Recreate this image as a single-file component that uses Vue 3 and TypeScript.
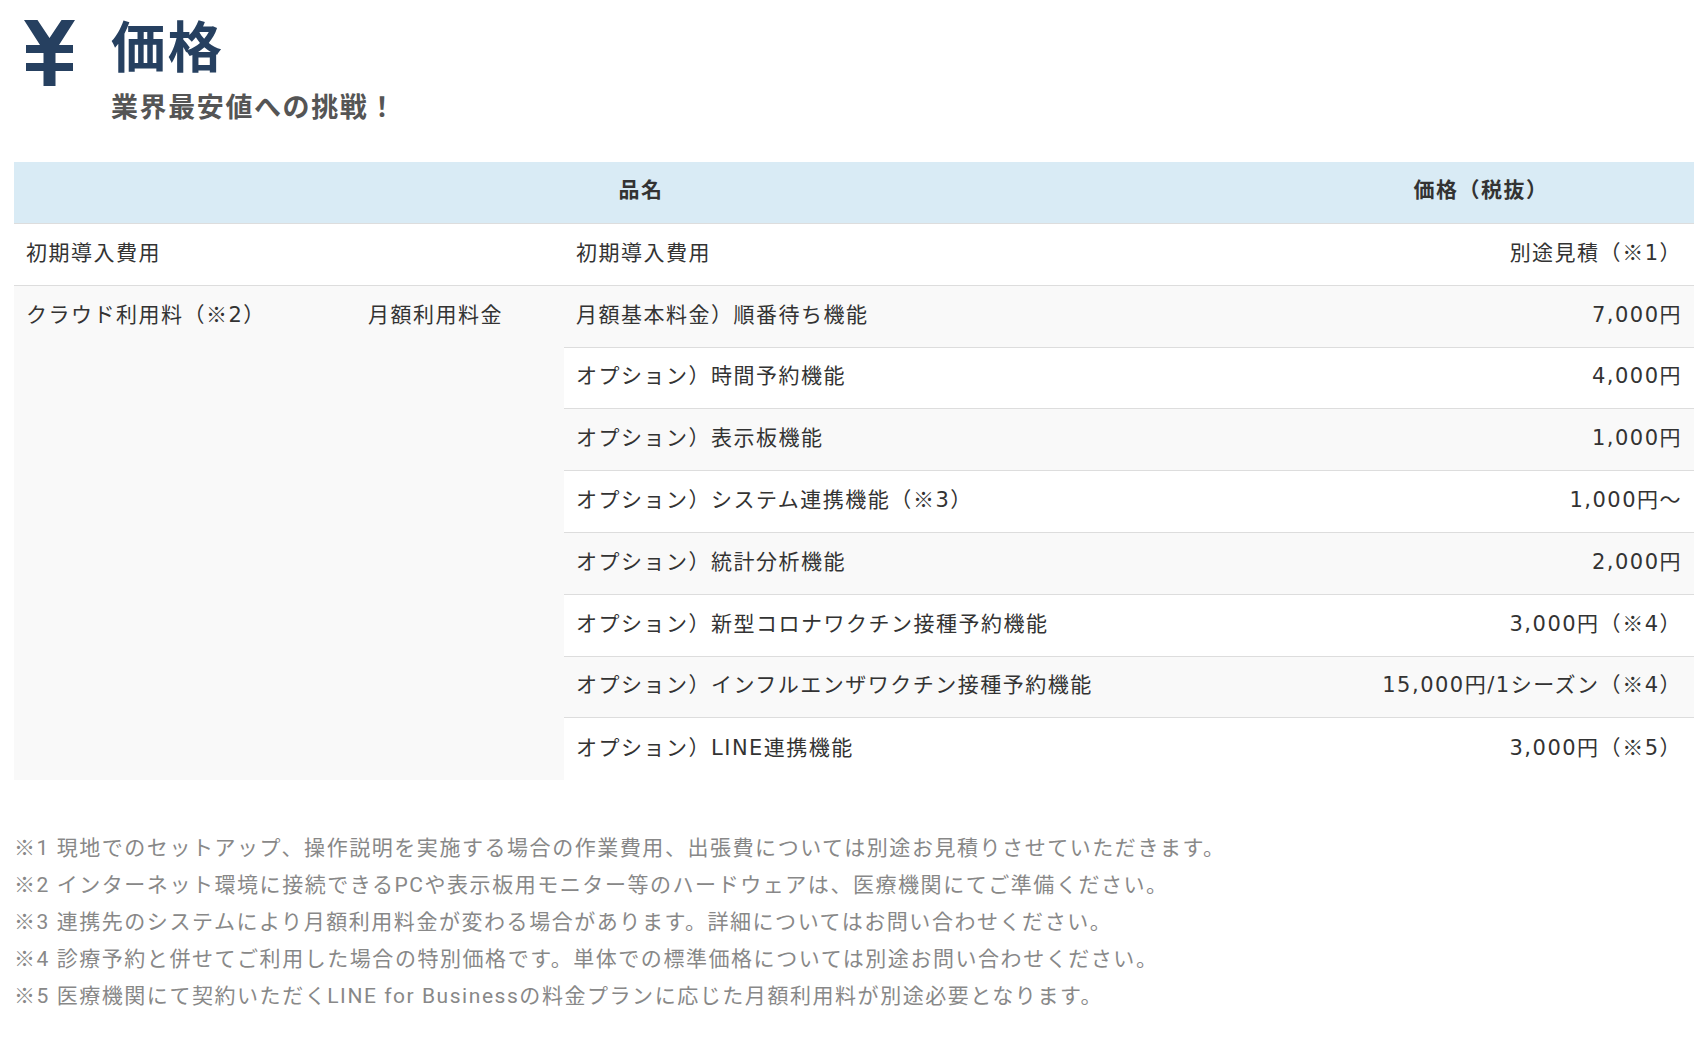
<script setup lang="ts">
interface Row { name: string; price: string }
const rows: Row[] = [
  { name: '月額基本料金）順番待ち機能', price: '7,000円' },
  { name: 'オプション）時間予約機能', price: '4,000円' },
  { name: 'オプション）表示板機能', price: '1,000円' },
  { name: 'オプション）システム連携機能（※3）', price: '1,000円～' },
  { name: 'オプション）統計分析機能', price: '2,000円' },
  { name: 'オプション）新型コロナワクチン接種予約機能', price: '3,000円（※4）' },
  { name: 'オプション）インフルエンザワクチン接種予約機能', price: '15,000円/1シーズン（※4）' },
  { name: 'オプション）LINE連携機能', price: '3,000円（※5）' },
]
const notes: string[] = [
  '※1 現地でのセットアップ、操作説明を実施する場合の作業費用、出張費については別途お見積りさせていただきます。',
  '※2 インターネット環境に接続できるPCや表示板用モニター等のハードウェアは、医療機関にてご準備ください。',
  '※3 連携先のシステムにより月額利用料金が変わる場合があります。詳細についてはお問い合わせください。',
  '※4 診療予約と併せてご利用した場合の特別価格です。単体での標準価格については別途お問い合わせください。',
  '※5 医療機関にて契約いただくLINE for Businessの料金プランに応じた月額利用料が別途必要となります。',
]
// The reference mark is full-width, so it is set in the CJK face.
const parts = (text: string): string[] => text.split(/(※)/).filter(Boolean)
</script>

<template>
  <div class="page">
    <header class="head">
      <svg class="yen" viewBox="0 0 51 66" aria-hidden="true">
        <path d="M0 0H13.5L25.5 18L37.5 0H51L35 25H49V33H31.5V43H49V51H31.5V66H19.5V51H2V43H19.5V33H2V25H16Z" fill="#264060" />
      </svg>
      <div class="titles">
        <h1>価格</h1>
        <p>業界最安値への挑戦！</p>
      </div>
    </header>

    <table>
      <colgroup>
        <col class="c1" /><col class="c2" /><col class="c3" /><col />
      </colgroup>
      <thead>
        <tr><th colspan="3">品名</th><th>価格（税抜）</th></tr>
      </thead>
      <tbody>
        <tr>
          <td colspan="2">初期導入費用</td>
          <td>初期導入費用</td>
          <td class="price">別途見積（<span class="mark">※</span>1）</td>
        </tr>
        <tr v-for="(r, i) in rows" :key="r.name" :class="i % 2 === 0 ? 'gray' : ''">
          <td v-if="i === 0" rowspan="8" class="gray span">クラウド利用料（<span class="mark">※</span>2）</td>
          <td v-if="i === 0" rowspan="8" class="gray span">月額利用料金</td>
          <td><template v-for="p in parts(r.name)" :key="p"><span v-if="p === '※'" class="mark">※</span><template v-else>{{ p }}</template></template></td>
          <td class="price"><template v-for="p in parts(r.price)" :key="p"><span v-if="p === '※'" class="mark">※</span><template v-else>{{ p }}</template></template></td>
        </tr>
      </tbody>
    </table>

    <ul class="notes">
      <li v-for="n in notes" :key="n">{{ n }}</li>
    </ul>
  </div>
</template>

<style scoped>
.page {
  width: 1696px;
  height: 1042px;
  overflow: hidden;
  box-sizing: border-box;
  padding: 20px 2px 0 14px;
  font-family: Roboto, "Noto Sans CJK JP", sans-serif;
  color: #333;
}
.head {
  display: flex;
  align-items: flex-start;
  height: 142px;
  padding-left: 10px;
}
.yen {
  width: 51px;
  height: 66px;
  flex: none;
}
.titles {
  margin-left: 36px;
}
h1 {
  margin: -8px 0 0;
  font-size: 54.4px;
  line-height: 74px;
  font-weight: 700;
  letter-spacing: 2px;
  color: #264060;
}
.titles p {
  margin: 4px 0 0;
  font-size: 27px;
  line-height: 36px;
  font-weight: 700;
  letter-spacing: 1.6px;
  color: #555;
}
table {
  width: 1680px;
  table-layout: fixed;
  border-collapse: separate;
  border-spacing: 0;
  font-family: "DejaVu Sans", "Noto Sans CJK JP", sans-serif;
  font-size: 21px;
  letter-spacing: 1.5px;
}
.c1 { width: 342px; }
.c2 { width: 208px; }
.c3 { width: 704px; }
th {
  height: 62px;
  box-sizing: border-box;
  padding: 0 12px 10px;
  background: #d9ebf5;
  font-weight: 700;
  border-bottom: 1px solid #ddd;
}
td {
  height: 61.8px;
  box-sizing: border-box;
  padding: 0 12px 7px;
  vertical-align: middle;
  border-bottom: 1px solid #ddd;
  white-space: nowrap;
}
tbody tr:last-child td {
  border-bottom: none;
}
td.span {
  vertical-align: top;
  padding-top: 12px;
  border-bottom: none;
}
.mark {
  font-family: "Noto Sans CJK JP", sans-serif;
}
.gray {
  background: #f9f9f9;
}
.price {
  text-align: right;
}
.notes {
  list-style: none;
  margin: 50px 0 0;
  padding: 0;
  font-size: 21px;
  line-height: 37px;
  letter-spacing: 1.55px;
  color: #888;
  white-space: nowrap;
}
</style>
